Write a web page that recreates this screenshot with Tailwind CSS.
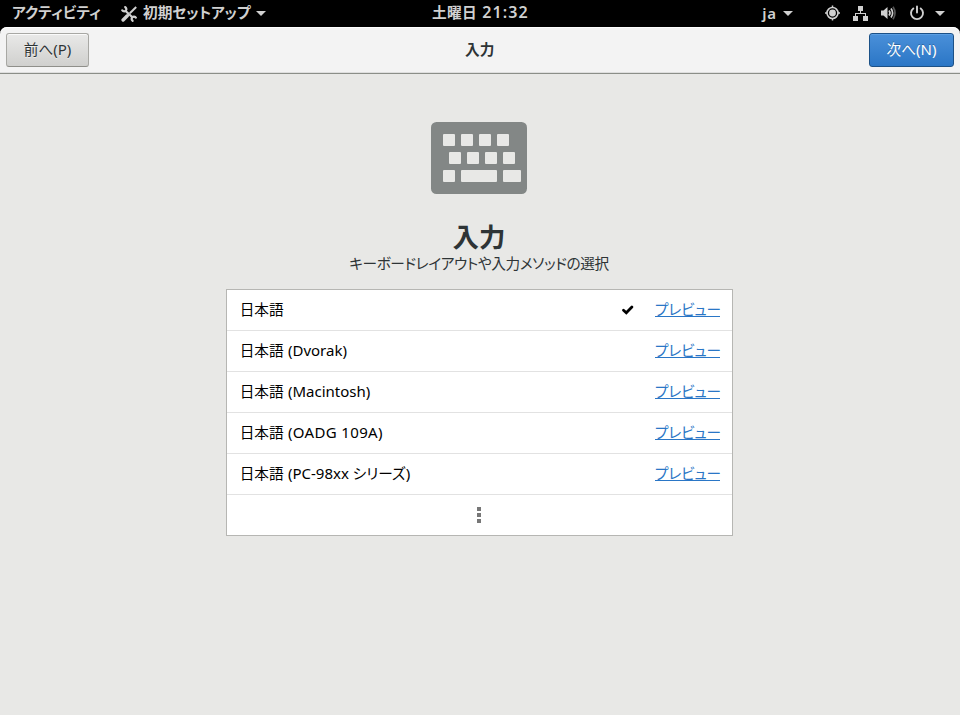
<!DOCTYPE html>
<html lang="ja">
<head>
<meta charset="utf-8">
<title>初期セットアップ</title>
<script src="https://cdn.jsdelivr.net/npm/@tailwindcss/browser@4"></script>
</head>
<body class="w-[960px] h-[715px] overflow-hidden bg-black flex flex-col whitespace-nowrap font-['Noto_Sans_CJK_JP',sans-serif] text-[14.67px] leading-[20px] [font-feature-settings:'palt']">
<header class="h-[27px] shrink-0 flex items-center relative text-[#d0d0d0] font-bold pl-3 pr-[15px] pb-[2px]">
  <span class="w-[109px] mb-px tracking-[0.1px]">アクティビティ</span>
  <svg class="w-4 h-4 mr-[6px] mt-[2px]" viewBox="0 0 16 16" fill="none" stroke="#d0d0d0"><path d="M4 4.500l8.200 7.500" stroke-width="2.300"/><path d="M.9 3.500C1.500 6 4.800 6 5.300 3.800 5.500 2.500 4.800 1 3.300.9" stroke-width="2.200"/><path d="M15.200 12.500C14.500 10 11.500 10 10.800 12c-.5 1.500.3 3 1.700 3.200" stroke-width="2.200"/><path d="M15.200 1L8.800 7.200" stroke-width="2"/><path d="M6.300 9.700l-4.200 4.300" stroke-width="3.400" stroke-linecap="round"/></svg>
  <span class="w-[113px] mb-[2px]">初期セットアップ</span>
  <svg class="w-[10px] h-[5px] mt-[2px]" viewBox="0 0 10 5"><path d="M0 0h10L5 5z" fill="#d0d0d0"/></svg>
  <div class="absolute left-[432px] top-[2px] flex gap-[5px]"><span class="tracking-[0.4px]">土曜日</span><span class="font-['Noto_Sans'] font-semibold text-[16px] tracking-[1.1px]">21:32</span></div>
  <span class="ml-auto mr-[6px] font-['Noto_Sans'] font-semibold text-[15px] tracking-[0.9px]">ja</span>
  <svg class="w-[10px] h-[5px] mt-[2px] mr-8" viewBox="0 0 10 5"><path d="M0 0h10L5 5z" fill="#d0d0d0"/></svg>
  <svg class="w-4 h-4 mr-3" viewBox="0 0 16 16" fill="none" stroke="#d0d0d0"><circle cx="7.500" cy="8" r="5.500" stroke-width="1.600"/><circle cx="7.500" cy="8" r="3.400" fill="#d0d0d0" stroke="none"/><path d="M7.500 .5v2M7.500 13.500v2M0 8h2M13 8h2" stroke-width="1.500"/></svg>
  <svg class="w-4 h-4 mr-3 mt-[2px]" viewBox="0 0 16 16" fill="#d0d0d0"><path d="M5 0h5v5H5zM0 10h5v5H0zM10 10h5v5h-5zM7 5h1v3H7zM2 7h11v3h-1V8H3v2H2z"/></svg>
  <svg class="w-4 h-4 mr-3" viewBox="0 0 16 16" fill="none" stroke="#d0d0d0"><path d="M0 5.500h2.500L6.500 2v12l-4-3.500H0z" fill="#d0d0d0" stroke="none"/><path d="M8 5.500q2 2.500 0 5" stroke-width="1.700"/><path d="M10 3.500q3.200 4.500 0 9" stroke-width="1.700"/><path d="M12 1.800q4 6.200 0 12.400" stroke="#555" stroke-width="1.700"/></svg>
  <svg class="w-4 h-4 mr-[10px]" viewBox="0 0 16 16" fill="none" stroke="#d0d0d0" stroke-width="1.900" stroke-linecap="round"><path d="M8 1.500v6M4.300 3.400a6 6 0 1 0 7.400 0"/></svg>
  <svg class="w-[10px] h-[5px] mt-[2px]" viewBox="0 0 10 5"><path d="M0 0h10L5 5z" fill="#d0d0d0"/></svg>
</header>
<div class="h-[47px] shrink-0 bg-[#f3f3f3] rounded-t-[7px] border-b border-[#8b8e88] shadow-[inset_0_1px_#fff,inset_0_-1px_#dedede] flex items-center justify-between px-[6px] text-[#2e3436]">
  <button class="w-[83px] h-[34px] mb-px rounded-[3px] border border-[#a8a8a4] border-b-[#8f8f8a] bg-linear-to-b from-[#e9e9e8] to-[#d0d0ce] shadow-[inset_0_1px_#fafafa] [text-shadow:0_1px_#fff8] pb-[2px]">前へ<span class="font-['Noto_Sans'] text-[15px]">(P)</span></button>
  <span class="font-bold absolute left-[465px] top-[39px]">入力</span>
  <button class="w-[85px] h-[34px] mb-px rounded-[3px] border border-[#1c5187] bg-linear-to-b from-[#4a90d9] to-[#2a76c6] shadow-[inset_0_1px_#5c9fe3] text-white [text-shadow:0_-1px_#0004] pb-[2px]">次へ<span class="font-['Noto_Sans'] text-[15px]">(N)</span></button>
</div>
<main class="flex-1 bg-[#e8e8e6] flex flex-col items-center text-[#2e3436] pt-12">
  <svg class="w-24 h-[72px] mr-[2px]" viewBox="0 0 96 72"><rect width="96" height="72" rx="5.500" fill="#838786"/><g fill="#e8e8e6"><rect x="12" y="12" width="12" height="12" rx="1"/><rect x="30" y="12" width="12" height="12" rx="1"/><rect x="48" y="12" width="12" height="12" rx="1"/><rect x="66" y="12" width="12" height="12" rx="1"/><rect x="18" y="30" width="12" height="12" rx="1"/><rect x="36" y="30" width="12" height="12" rx="1"/><rect x="54" y="30" width="12" height="12" rx="1"/><rect x="72" y="30" width="12" height="12" rx="1"/><rect x="12" y="48" width="12" height="12" rx="1"/><rect x="30" y="48" width="36" height="12" rx="1"/><rect x="72" y="48" width="18" height="12" rx="1"/></g></svg>
  <h1 class="text-[26.4px] leading-[32px] font-bold mt-[26px] mr-[2px]">入力</h1>
  <p class="mt-[1px] mr-[2px] tracking-[-0.37px]">キーボードレイアウトや入力メソッドの選択</p>
  <div class="mt-[16px] w-[507px] h-[247px] bg-white border border-[#b6b6b3] text-black divide-y divide-[#e2e2e2] ml-[-1px]">
    <div class="h-[41px] flex items-center pl-[12.7px] pr-3"><span class="mb-[2px]">日本語</span><svg class="ml-auto mr-[21px] w-3 h-[10px]" viewBox="0 0 12 10"><path d="M1.500 5.200l2.800 2.600L9.900 2" fill="none" stroke="#000" stroke-width="2.700" stroke-linecap="round"/></svg><a class="w-[65px] h-[17px] mb-[3px] leading-[17px] tracking-[-0.15px] border-b border-[#2a76c6] text-[#2a76c6]">プレビュー</a></div>
    <div class="h-[41px] flex items-center pl-[12.7px] pr-3"><span class="mb-[2px]">日本語 <span class="font-['Noto_Sans'] text-[15px] ml-px">(Dvorak)</span></span><a class="ml-auto w-[65px] h-[17px] mb-[3px] leading-[17px] tracking-[-0.15px] border-b border-[#2a76c6] text-[#2a76c6]">プレビュー</a></div>
    <div class="h-[41px] flex items-center pl-[12.7px] pr-3"><span class="mb-[2px]">日本語 <span class="font-['Noto_Sans'] text-[15px] ml-px">(Macintosh)</span></span><a class="ml-auto w-[65px] h-[17px] mb-[3px] leading-[17px] tracking-[-0.15px] border-b border-[#2a76c6] text-[#2a76c6]">プレビュー</a></div>
    <div class="h-[41px] flex items-center pl-[12.7px] pr-3"><span class="mb-[2px]">日本語 <span class="font-['Noto_Sans'] text-[15px] ml-px tracking-[0.35px]">(OADG 109A)</span></span><a class="ml-auto w-[65px] h-[17px] mb-[3px] leading-[17px] tracking-[-0.15px] border-b border-[#2a76c6] text-[#2a76c6]">プレビュー</a></div>
    <div class="h-[41px] flex items-center pl-[12.7px] pr-3"><span class="mb-[2px]">日本語 <span class="font-['Noto_Sans'] text-[15px] ml-px">(PC-98xx </span>シリーズ<span class="font-['Noto_Sans'] text-[15px]">)</span></span><a class="ml-auto w-[65px] h-[17px] mb-[3px] leading-[17px] tracking-[-0.15px] border-b border-[#2a76c6] text-[#2a76c6]">プレビュー</a></div>
    <div class="h-10 flex flex-col items-center justify-center gap-[2px] pr-[2px]"><i class="size-1 bg-[#777]"></i><i class="size-1 bg-[#777]"></i><i class="size-1 bg-[#777]"></i></div>
  </div>
</main>
</body>
</html>
